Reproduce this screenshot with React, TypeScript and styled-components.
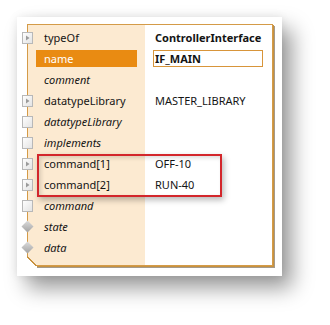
import styled, { createGlobalStyle } from "styled-components"

const GlobalStyle = createGlobalStyle`
  html, body {
    margin: 0;
    padding: 0;
    background: #fff;
  }
  body {
    font-family: "Noto Sans", "Open Sans", sans-serif;
    font-size: 11px;
    color: #141414;
  }
`

type IconKind = 'expand' | 'box' | 'diamond' | 'none'

interface RowData {
    icon: IconKind;
    label: string;
    italic?: boolean;
    selected?: boolean;
    value?: string;
    bold?: boolean;
    editing?: boolean;
}

const rows: RowData[] = [
    { icon: 'expand', label: 'typeOf', value: 'ControllerInterface', bold: true },
    { icon: 'none', label: 'name', selected: true, value: 'IF_MAIN', editing: true },
    { icon: 'none', label: 'comment', italic: true },
    { icon: 'expand', label: 'datatypeLibrary', value: 'MASTER_LIBRARY' },
    { icon: 'box', label: 'datatypeLibrary', italic: true },
    { icon: 'box', label: 'implements', italic: true },
]

const commandRows: RowData[] = [
    { icon: 'expand', label: 'command[1]', value: 'OFF-10' },
    { icon: 'expand', label: 'command[2]', value: 'RUN-40' },
]

const tailRows: RowData[] = [
    { icon: 'box', label: 'command', italic: true },
    { icon: 'diamond', label: 'state', italic: true },
    { icon: 'diamond', label: 'data', italic: true },
]

const Page = styled.div`
    width: 330px;
    height: 325px;
    padding: 17px 0 0 17px;
    box-sizing: border-box;
    overflow: hidden;
`

const Card = styled.div`
    width: 265px;
    height: 259px;
    box-sizing: border-box;
    background: #fff;
    padding: 7px 9px 0 10px;
    box-shadow: 10px 12px 20px rgba(0, 0, 0, .4), 0 0 9px rgba(0, 0, 0, .08);
`

const Panel = styled.div`
    position: relative;
    height: 242px;
    box-sizing: border-box;
    border: 1px solid #d49b48;
    box-shadow: 1px 1px 0 #c8923f, 2px 2px 0 #a49a8c;
    background: linear-gradient(to right, #fcead1 0, #fcead1 117px, #fff 117px);
    padding-top: 2px;

    &::after {
        content: '';
        position: absolute;
        left: -1px;
        bottom: -1px;
        width: 10px;
        height: 10px;
        background: linear-gradient(45deg, #fff 0, #fff calc(50% - 1px), #c8923f calc(50% - 1px), #c8923f 50%, transparent 50%);
    }

    &::before {
        content: '';
        position: absolute;
        left: 0;
        bottom: -4px;
        width: 9px;
        height: 3px;
        background: #fff;
    }
`

const Row = styled.div`
    display: grid;
    grid-template-columns: 117px 1fr;
    height: 21px;
`

const LabelCell = styled.div`
    display: flex;
    align-items: center;
`

const IconSlot = styled.span`
    display: flex;
    width: 13px;
    margin-left: -7px;
    margin-right: 2px;
    justify-content: center;
    flex-shrink: 0;
`

const Label = styled.span<{ $italic?: boolean; $selected?: boolean }>`
    flex: 1;
    height: 17px;
    margin-right: 8px;
    padding-left: 8px;
    display: flex;
    align-items: center;
    font-style: ${p => p.$italic ? 'italic' : 'normal'};
    background: ${p => p.$selected ? '#e98b12' : 'transparent'};
    color: ${p => p.$selected ? '#fff' : '#141414'};
`

const ValueCell = styled.div`
    display: flex;
    align-items: center;
    padding-left: 8px;
`

const Value = styled.span<{ $bold?: boolean }>`
    margin-left: 2px;
    font-weight: ${p => p.$bold ? 700 : 400};
`

const EditBox = styled.span`
    width: 110px;
    height: 17px;
    box-sizing: border-box;
    border: 1px solid #d8953a;
    padding-left: 1px;
    display: flex;
    align-items: center;
    font-weight: 700;
`

const CommandGroup = styled.div`
    position: relative;

    &::after {
        content: '';
        position: absolute;
        left: 9px;
        top: 1px;
        width: 185px;
        height: 43px;
        box-sizing: border-box;
        border: 2px solid #d3262b;
        box-shadow: 2px 3px 6px rgba(0, 0, 0, .28), inset 2px 2px 4px rgba(0, 0, 0, .14);
        pointer-events: none;
    }
`

const RowIcon = ({ kind }: { kind: IconKind }) => {
    if (kind === 'none') return null
    if (kind === 'diamond') {
        return (
            <svg width="13" height="13" viewBox="0 0 13 13">
                <defs>
                    <linearGradient id="dg" x1="0" y1="0" x2="0" y2="1">
                        <stop offset="0" stopColor="#dcdcdc" />
                        <stop offset="1" stopColor="#a2a2a2" />
                    </linearGradient>
                </defs>
                <polygon points="6.5,0.5 12.5,6.5 6.5,12.5 0.5,6.5" fill="url(#dg)" />
            </svg>
        )
    }
    return (
        <svg width="11" height="12" viewBox="0 0 11 12">
            <defs>
                <linearGradient id="bg" x1="0" y1="0" x2="1" y2="1">
                    <stop offset="0" stopColor="#ffffff" />
                    <stop offset="1" stopColor="#e2e2e2" />
                </linearGradient>
            </defs>
            <rect x="0.5" y="0.5" width="10" height="11" fill="url(#bg)" stroke="#b8b8b8" />
            {kind === 'expand' && <path d="M4 3.5 L7.5 6 L4 8.5 Z" fill="#9b9b9b" />}
        </svg>
    )
}

const PropertyRow = ({ row }: { row: RowData }) => (
    <Row>
        <LabelCell>
            <IconSlot><RowIcon kind={row.icon} /></IconSlot>
            <Label $italic={row.italic} $selected={row.selected}>{row.label}</Label>
        </LabelCell>
        <ValueCell>
            {row.editing
                ? <EditBox>{row.value}</EditBox>
                : row.value && <Value $bold={row.bold}>{row.value}</Value>}
        </ValueCell>
    </Row>
)

export default function App() {
    return (
        <Page>
            <GlobalStyle />
            <Card>
                <Panel>
                    {rows.map((r, i) => <PropertyRow key={'a' + i} row={r} />)}
                    <CommandGroup>
                        {commandRows.map((r, i) => <PropertyRow key={'c' + i} row={r} />)}
                    </CommandGroup>
                    {tailRows.map((r, i) => <PropertyRow key={'t' + i} row={r} />)}
                </Panel>
            </Card>
        </Page>
    )
}
